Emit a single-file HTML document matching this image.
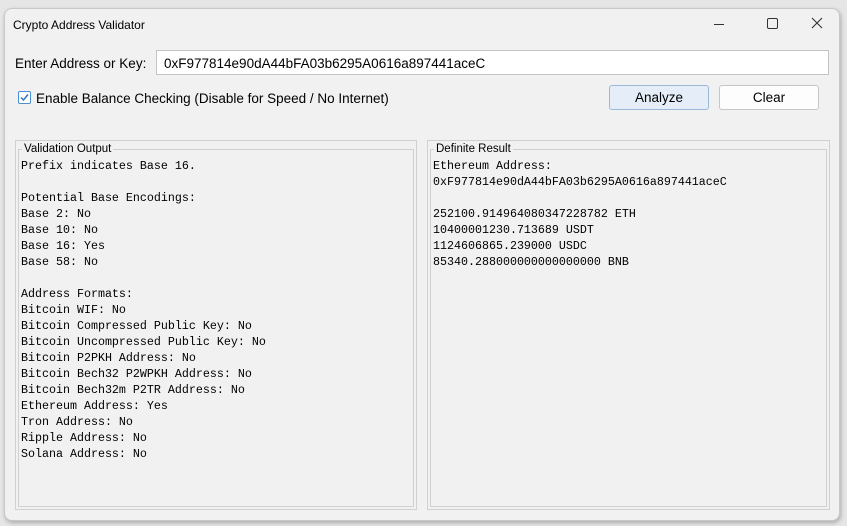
<!DOCTYPE html>
<html><head><style>
*{margin:0;padding:0;box-sizing:border-box}
body{width:847px;height:526px;background:#e6e6e6;position:relative;overflow:hidden;font-family:"Liberation Sans",sans-serif;color:#000}
.win{position:absolute;left:4px;top:8px;width:836px;height:513px;background:#f1f1f1;border:1px solid #c8c8c8;border-radius:8px;box-shadow:1px 2px 4px rgba(0,0,0,.25)}
.abs{position:absolute}
.title{left:13px;top:18px;font-size:12px}
.lbl{font-size:13.5px}
.input{left:156px;top:50px;width:673px;height:25px;background:#fff;border:1px solid #c4c4c4;font-size:13.5px;padding:5px 0 0 7px}
.btn{top:85px;width:100px;height:25px;border:1px solid #c6c6c6;border-radius:3px;background:#fdfdfd;font-size:13.5px;text-align:center;line-height:24px}
.frame{border:1px solid #d0d0d0}
pre{position:absolute;font-family:"Liberation Mono",monospace;font-size:11.67px;line-height:16px}
.leg{font-size:11.5px;background:#f1f1f1;padding:0 2px}
</style></head><body>
<div class="win"></div>
<div class="abs title">Crypto Address Validator</div>
<div class="abs" style="left:714px;top:24px;width:10px;height:1px;background:#333"></div>
<div class="abs" style="left:767px;top:18px;width:11px;height:11px;border:1px solid #333;border-radius:2px"></div>
<svg class="abs" style="left:811px;top:17px" width="12" height="12"><path d="M1 1L11 11M11 1L1 11" stroke="#333" stroke-width="1.1"/></svg>
<div class="abs lbl" style="left:15px;top:56px">Enter Address or Key:</div>
<div class="abs input">0xF977814e90dA44bFA03b6295A0616a897441aceC</div>
<div class="abs" style="left:18px;top:91px;width:13px;height:13px;border:1px solid #4a8fd6;border-radius:2px;background:#fff"></div>
<svg class="abs" style="left:18px;top:91px" width="13" height="13"><path d="M3 6.5L5.5 9L10 3.5" stroke="#2a6fc0" stroke-width="1.4" fill="none"/></svg>
<div class="abs lbl" style="left:36px;top:91px">Enable Balance Checking (Disable for Speed / No Internet)</div>
<div class="abs btn" style="left:609px;background:#e5eef8;border-color:#9ab8d8">Analyze</div>
<div class="abs btn" style="left:719px">Clear</div>

<div class="abs frame" style="left:15px;top:140px;width:402px;height:370px"></div>
<div class="abs frame" style="left:18px;top:149px;width:396px;height:358px"></div>
<div class="abs leg" style="left:22px;top:143px">Validation Output</div>
<pre style="left:21px;top:158px">Prefix indicates Base 16.

Potential Base Encodings:
Base 2: No
Base 10: No
Base 16: Yes
Base 58: No

Address Formats:
Bitcoin WIF: No
Bitcoin Compressed Public Key: No
Bitcoin Uncompressed Public Key: No
Bitcoin P2PKH Address: No
Bitcoin Bech32 P2WPKH Address: No
Bitcoin Bech32m P2TR Address: No
Ethereum Address: Yes
Tron Address: No
Ripple Address: No
Solana Address: No</pre>

<div class="abs frame" style="left:427px;top:140px;width:403px;height:370px"></div>
<div class="abs frame" style="left:430px;top:149px;width:397px;height:358px"></div>
<div class="abs leg" style="left:434px;top:143px">Definite Result</div>
<pre style="left:433px;top:158px">Ethereum Address:
0xF977814e90dA44bFA03b6295A0616a897441aceC

252100.914964080347228782 ETH
10400001230.713689 USDT
1124606865.239000 USDC
85340.288000000000000000 BNB</pre>
</body></html>
